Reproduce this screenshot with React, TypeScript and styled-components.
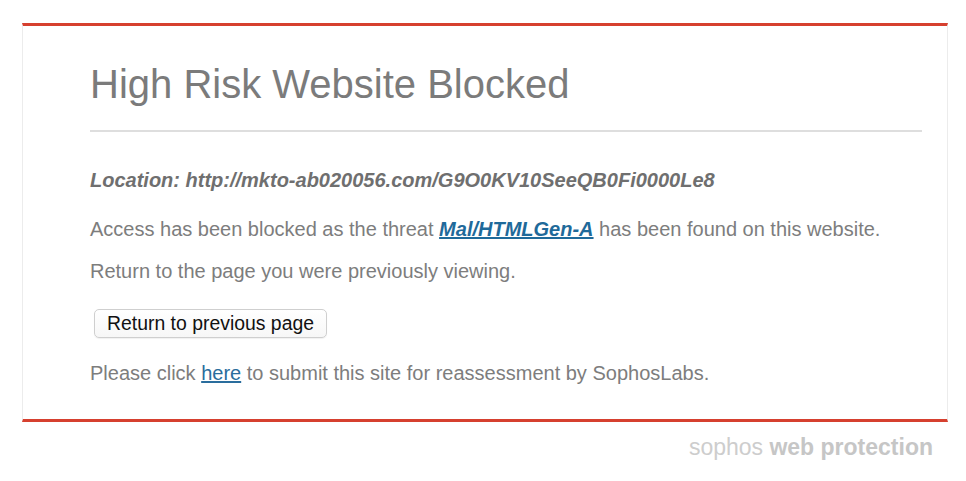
import styled, { createGlobalStyle } from "styled-components";

const GlobalStyle = createGlobalStyle`
  html, body {
    margin: 0;
    padding: 0;
    background: #ffffff;
  }
  body {
    font-family: "Liberation Sans", Arial, Helvetica, sans-serif;
  }
`;

const Page = styled.div`
  padding: 23px 18px 0 22px;
`;

const Card = styled.section`
  width: 926px;
  box-sizing: border-box;
  border-top: 3px solid #d6402f;
  border-bottom: 3px solid #d6402f;
  border-left: 1px solid #ececec;
  border-right: 1px solid #ececec;
  padding: 35px 25px 34px 67px;
`;

const Title = styled.h1`
  margin: 0;
  font-size: 40px;
  line-height: 46px;
  font-weight: normal;
  color: #7b7b7b;
`;

const Rule = styled.hr`
  margin: 23px 0 36px;
  border: 0;
  height: 2px;
  background: #dedede;
`;

const Location = styled.p`
  margin: 0 0 25px;
  font-size: 20px;
  line-height: 24px;
  font-weight: bold;
  font-style: italic;
  color: #6f6f6f;
`;

const Text = styled.p<{ $gap?: number }>`
  margin: 0 0 ${({ $gap }) => $gap ?? 18}px;
  font-size: 20px;
  line-height: 24px;
  color: #7d7d7d;
`;

const ThreatLink = styled.a`
  color: #1f6a9a;
  font-weight: bold;
  font-style: italic;
  text-decoration: underline;
`;

const HereLink = styled.a`
  color: #2a6d9d;
  text-decoration: underline;
`;

const BackButton = styled.button`
  display: block;
  margin: 0 0 23px 4px;
  height: 29px;
  width: 233px;
  padding: 0;
  font-family: "Liberation Sans", Arial, sans-serif;
  font-size: 19.4px;
  color: #111;
  background: linear-gradient(#ffffff, #f7f7f7);
  border: 1px solid #cfcfcf;
  border-radius: 5px;
  box-shadow: 0 1px 1px rgba(0, 0, 0, 0.06);
`;

const Footer = styled.footer`
  width: 926px;
  display: flex;
  justify-content: flex-end;
  padding: 12px 15px 0 0;
  box-sizing: border-box;
  font-size: 23px;
  color: #cdcdcd;

  b {
    color: #c6c6c6;
  }
`;

export default function App() {
  return (
    <>
      <GlobalStyle />
      <Page>
        <Card>
          <Title>High Risk Website Blocked</Title>
          <Rule />
          <Location>Location: http://mkto-ab020056.com/G9O0KV10SeeQB0Fi0000Le8</Location>
          <Text>
            Access has been blocked as the threat <ThreatLink href="#">Mal/HTMLGen-A</ThreatLink> has
            been found on this website.
          </Text>
          <Text $gap={26}>Return to the page you were previously viewing.</Text>
          <BackButton>Return to previous page</BackButton>
          <Text $gap={0}>
            Please click <HereLink href="#">here</HereLink> to submit this site for reassessment by
            SophosLabs.
          </Text>
        </Card>
        <Footer>
          <span>
            sophos <b>web protection</b>
          </span>
        </Footer>
      </Page>
    </>
  );
}
